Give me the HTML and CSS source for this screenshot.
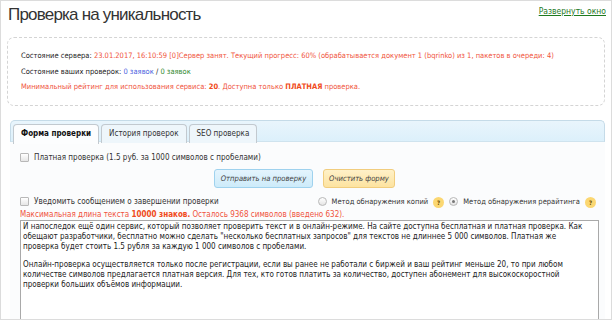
FILE: index.html
```html
<!DOCTYPE html>
<html lang="ru">
<head>
<meta charset="utf-8">
<link rel="stylesheet" href="styles.css">
</head>
<body>
<div class="frame">
  <div class="head">
    <h1 class="title">Проверка на уникальность</h1>
    <a class="expand" href="#">Развернуть окно</a>
  </div>
  <div class="status">
    <p class="line">Состояние сервера: <span class="red">23.01.2017, 16:10:59 [0]Сервер занят. Текущий прогресс: 60% (обрабатывается документ 1 (bqrinko) из 1, пакетов в очереди: 4)</span></p>
    <p class="line">Состояние ваших проверок: <span class="blue">0 заявок</span> / <span class="green">0 заявок</span></p>
    <p class="line red">Минимальный рейтинг для использования сервиса: <b>20</b>. Доступна только <b>ПЛАТНАЯ</b> проверка.</p>
  </div>
  <div class="tabs">
    <ul class="nav">
      <li class="tab active">Форма проверки</li>
      <li class="tab">История проверок</li>
      <li class="tab">SEO проверка</li>
    </ul>
    <div class="panel">
      <label class="check"><span class="box"></span>Платная проверка (1.5 руб. за 1000 символов с пробелами)</label>
      <div class="buttons">
        <span class="btn send">Отправить на проверку</span>
        <span class="btn clear">Очистить форму</span>
      </div>
      <div class="opts">
        <label class="check"><span class="box"></span>Уведомить сообщением о завершении проверки</label>
        <div class="methods">
          <span class="radio"></span><span class="mtext">Метод обнаружения копий</span><span class="help">?</span>
          <span class="radio on"></span><span class="mtext">Метод обнаружения рерайтинга</span><span class="help">?</span>
        </div>
      </div>
      <p class="limit">Максимальная длина текста <b>10000 знаков.</b> Осталось 9368 символов (введено 632).</p>
      <div class="text">
        <p>И напоследок ещё один сервис, который позволяет проверить текст и в онлайн-режиме. На сайте доступна бесплатная и платная проверка. Как обещают разработчики, бесплатно можно сделать "несколько бесплатных запросов" для текстов не длиннее 5 000 символов. Платная же<br>проверка будет стоить 1.5 рубля за каждую 1 000 символов с пробелами.</p>
        <p>Онлайн-проверка осуществляется только после регистрации, если вы ранее не работали с биржей и ваш рейтинг меньше 20, то при любом количестве символов предлагается платная версия. Для тех, кто готов платить за количество, доступен абонемент для высокоскоростной проверки больших объёмов информации.</p>
      </div>
    </div>
  </div>
</div>
</body>
</html>
```

FILE: styles.css
```css
html, body { margin: 0; padding: 0; background: #fff; }
body { font-family: "DejaVu Sans Condensed", "DejaVu Sans", sans-serif; color: #222; }
.frame {
  width: 610px; height: 318px; border: 1px solid #dcdcdc; overflow: hidden;
  box-sizing: content-box;
}
.head { display: flex; justify-content: space-between; align-items: flex-start; padding: 0 5px 0 7px; height: 36px; }
.title { font-family: "Liberation Sans", Arial, sans-serif; font-weight: normal; font-size: 17px; letter-spacing: -0.8px; color: #333; margin: 4px 0 0; }
.expand { font-size: 8.5px; color: #1f7a1f; margin-top: 5px; text-decoration: underline; }
.status {
  margin: 0 6px 0 6px; height: 69px; border: 1px dashed #d4d4d4; border-radius: 7px;
  padding: 10px 0 0 13px; box-sizing: border-box;
}
.line { margin: 0; font-size: 7.5px; line-height: 15.5px; color: #222; }
.red { color: #f0533c; }
.red b { color: #f04a20; }
.blue { color: #4a5fe0; }
.green { color: #2f8a2f; }
.tabs { margin: 14px 6px 0 9px; }
.nav {
  list-style: none; margin: 0; padding: 3px 0 0 2px; display: flex; gap: 2px;
  height: 22px; box-sizing: border-box; border: 1px solid #c5dbe8; border-bottom-color: #cfe3ee;
  border-radius: 5px 5px 0 0; background: linear-gradient(#e9f5fc, #dcf0fb);
}
.tab {
  font-size: 8px; height: 19px; line-height: 18px; padding: 0 7px; border: 1px solid #c2c9cf; border-bottom: 0;
  border-radius: 4px 4px 0 0; background: #eef6fb; color: #333; box-sizing: border-box; white-space: nowrap;
}
.tab.active { background: #fcfdfe; font-weight: bold; color: #111; height: 20px; }
.panel { background: #fbfcfd; padding: 9px 0 0 10px; height: 200px; }
.check { display: flex; align-items: center; font-size: 8px; color: #333; height: 12px; white-space: nowrap; }
.box { width: 7px; height: 7px; border: 1px solid #b8b8b8; background: linear-gradient(#fff, #e6e6e6); margin-right: 5px; border-radius: 1px; flex: none; }
.buttons { display: flex; gap: 10px; padding-left: 194px; margin-top: 6px; }
.btn { font-size: 7.6px; font-style: italic; height: 19px; line-height: 18px; box-sizing: border-box; border-radius: 3px; color: #444; white-space: nowrap; text-align: center; }
.send { background: linear-gradient(#e4f4fd, #cdebfa); border: 1px solid #9fd2ee; width: 99px; }
.clear { background: linear-gradient(#fff1c8, #fde3a0); border: 1px solid #f1cd7e; width: 72px; }
.opts { display: flex; justify-content: space-between; align-items: center; margin-top: 6px; height: 14px; }
.methods { display: flex; align-items: center; font-size: 7.5px; color: #333; padding-right: 4px; white-space: nowrap; }
.radio { width: 7px; height: 7px; border-radius: 50%; border: 1px solid #b8b8b8; background: linear-gradient(#fff, #e4e4e4); margin-right: 5px; position: relative; flex: none; }
.radio.on::after { content: ""; position: absolute; left: 2px; top: 2px; width: 3px; height: 3px; border-radius: 50%; background: #777; }
.help { width: 11px; height: 11px; border-radius: 50%; background: #fbd772; color: #6a4d00; font-size: 6px; font-weight: bold; display: inline-flex; align-items: center; justify-content: center; margin: 2px 5px 0 5px; flex: none; }
.limit { margin: 1px 0 0; font-size: 8px; color: #f0533c; line-height: 11px; white-space: nowrap; }
.limit b { color: #f04a20; }
.text {
  width: 579px; height: 120px; border: 1px solid #a9a9a9; background: #fff; box-sizing: border-box;
  padding: 1px 3px 1px 2px; font-size: 8px; line-height: 10px; color: #222; margin-top: 0;
}
.text p { margin: 0 0 8px; }
```
